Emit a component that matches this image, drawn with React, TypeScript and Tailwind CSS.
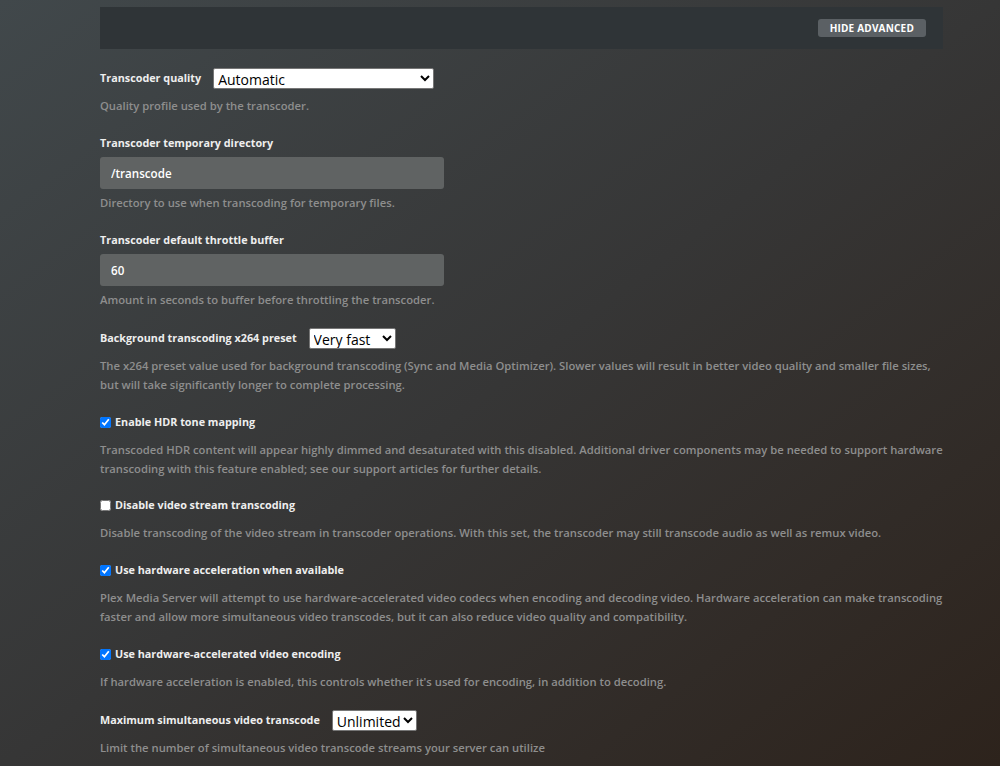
import { useState } from "react";

const FONT = { fontFamily: '"Open Sans", "Noto Sans", sans-serif' };

function Help({ lines, gap = "mt-2" }: { lines: string[]; gap?: string }) {
  return (
    <div className={`${gap} text-[11.25px] leading-[19px] font-semibold text-[#8e8e8e]`}>
      {lines.map((l) => (
        <p key={l} className="whitespace-nowrap">
          {l}
        </p>
      ))}
    </div>
  );
}

function SelectRow({ label, value, options, width }: { label: string; value: string; options: string[]; width: string }) {
  const [v, setV] = useState(value);
  return (
    <div className="flex items-center h-[21px]">
      <label className="text-[10.8px] font-bold text-[#eeeeee] mr-3">{label}</label>
      <select
        value={v}
        onChange={(e) => setV(e.target.value)}
        className={`${width} h-[21px] bg-white text-black text-[14px] leading-[19px] border border-[#767676] rounded-[2px] pl-0`}
        style={FONT}
      >
        {options.map((o) => (
          <option key={o}>{o}</option>
        ))}
      </select>
    </div>
  );
}

function TextRow({ label, value }: { label: string; value: string }) {
  return (
    <div>
      <label className="block text-[10.8px] leading-[20px] font-bold text-[#eeeeee]">{label}</label>
      <input
        defaultValue={value}
        className="mt-1 block w-[344px] h-[32px] rounded-[3px] bg-[#606363] px-[11px] text-[11.6px] font-semibold text-white outline-none"
        style={FONT}
      />
    </div>
  );
}

function Check({ label, checked }: { label: string; checked: boolean }) {
  return (
    <label className="flex items-center h-[20px] text-[10.8px] font-bold text-[#eeeeee]">
      <input type="checkbox" defaultChecked={checked} className="m-0 mr-[4px] w-[11px] h-[11px]" />
      {label}
    </label>
  );
}

export default function App() {
  return (
    <div className="min-h-[766px] w-full bg-gradient-to-br from-[#41484b] via-[#363636] to-[#2d231c] pt-[7px]" style={FONT}>
      <div className="ml-[100px] w-[843px]">
        {/* top bar */}
        <div className="h-[42px] bg-[#2f3437] flex items-center justify-end pr-[17px]">
          <button className="h-[18px] px-[12px] rounded-[3px] bg-[#5b6064] text-[10px] font-bold tracking-[0.02em] text-white uppercase leading-none">
            Hide Advanced
          </button>
        </div>

        <div className="pt-[19px]">
          <div className="mb-[18px]">
            <SelectRow label="Transcoder quality" value="Automatic" options={["Automatic", "Prefer higher speed encoding", "Prefer higher quality encoding", "Make my CPU hurt"]} width="w-[221px]" />
            <Help gap="mt-[7px]" lines={["Quality profile used by the transcoder."]} />
          </div>

          <div className="mb-[18px]">
            <TextRow label="Transcoder temporary directory" value="/transcode" />
            <Help gap="mt-1" lines={["Directory to use when transcoding for temporary files."]} />
          </div>

          <div className="mb-[19px]">
            <TextRow label="Transcoder default throttle buffer" value="60" />
            <Help gap="mt-1" lines={["Amount in seconds to buffer before throttling the transcoder."]} />
          </div>

          <div className="mb-[18px]">
            <SelectRow label="Background transcoding x264 preset" value="Very fast" options={["Ultra fast", "Super fast", "Very fast", "Faster", "Fast", "Medium", "Slow", "Slower", "Very slow"]} width="w-[87px]" />
            <Help
              gap="mt-[7px]"
              lines={[
                "The x264 preset value used for background transcoding (Sync and Media Optimizer). Slower values will result in better video quality and smaller file sizes,",
                "but will take significantly longer to complete processing.",
              ]}
            />
          </div>

          <div className="mb-[17px]">
            <Check label="Enable HDR tone mapping" checked />
            <Help
              lines={[
                "Transcoded HDR content will appear highly dimmed and desaturated with this disabled. Additional driver components may be needed to support hardware",
                "transcoding with this feature enabled; see our support articles for further details.",
              ]}
            />
          </div>

          <div className="mb-[18px]">
            <Check label="Disable video stream transcoding" checked={false} />
            <Help lines={["Disable transcoding of the video stream in transcoder operations. With this set, the transcoder may still transcode audio as well as remux video."]} />
          </div>

          <div className="mb-[18px]">
            <Check label="Use hardware acceleration when available" checked />
            <Help
              lines={[
                "Plex Media Server will attempt to use hardware-accelerated video codecs when encoding and decoding video. Hardware acceleration can make transcoding",
                "faster and allow more simultaneous video transcodes, but it can also reduce video quality and compatibility.",
              ]}
            />
          </div>

          <div className="mb-[19px]">
            <Check label="Use hardware-accelerated video encoding" checked />
            <Help lines={["If hardware acceleration is enabled, this controls whether it's used for encoding, in addition to decoding."]} />
          </div>

          <div className="mb-[18px]">
            <SelectRow label="Maximum simultaneous video transcode" value="Unlimited" options={["Unlimited", "1", "2", "3", "4", "5"]} width="w-[85px]" />
            <Help gap="mt-[7px]" lines={["Limit the number of simultaneous video transcode streams your server can utilize"]} />
          </div>
        </div>
      </div>
    </div>
  );
}
